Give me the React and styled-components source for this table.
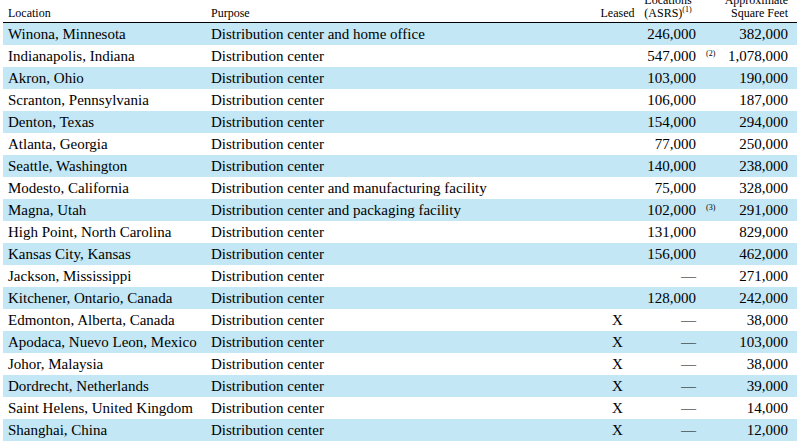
import styled, { createGlobalStyle } from 'styled-components';

const GlobalStyle = createGlobalStyle`
    html, body {
        margin: 0;
        padding: 0;
        background: #fff;
        overflow: hidden;
    }
    body {
        font-family: "Liberation Serif", "Times New Roman", serif;
        color: #000;
    }
`;

const Page = styled.div`
    width: 800px;
    height: 446px;
    overflow: hidden;
`;

const Table = styled.table`
    width: 794px;
    margin: -6px 0 0 3px;
    border-collapse: collapse;
    table-layout: fixed;
`;

const HeadCell = styled.th`
    font-weight: normal;
    font-size: 12px;
    line-height: 13px;
    vertical-align: bottom;
    padding: 0 ${({ $pr }) => $pr || 0}px 2px ${({ $pl }) => $pl || 0}px;
    text-align: ${({ $align }) => $align || 'left'};
    border-bottom: 1px solid #000;
    white-space: nowrap;
`;

const Row = styled.tr`
    background: ${({ $shaded }) => ($shaded ? '#c3e7f5' : '#fff')};
`;

const Cell = styled.td`
    font-size: 15px;
    height: 22px;
    line-height: 22px;
    padding: 0 ${({ $pr }) => $pr || 0}px 0 ${({ $pl }) => $pl || 0}px;
    text-align: ${({ $align }) => $align || 'left'};
    white-space: nowrap;
    vertical-align: middle;
`;

const Sup = styled.span`
    font-size: 8px;
    line-height: 0;
    vertical-align: 5px;
`;

const NoteCell = styled.td`
    font-size: 8px;
    line-height: 22px;
    padding: 0 0 0 9px;
    vertical-align: top;
    white-space: nowrap;
`;

const Note = styled.span`
    position: relative;
    top: -2px;
`;

const rows = [
    ['Winona, Minnesota', 'Distribution center and home office', '', '246,000', '', '382,000'],
    ['Indianapolis, Indiana', 'Distribution center', '', '547,000', '(2)', '1,078,000'],
    ['Akron, Ohio', 'Distribution center', '', '103,000', '', '190,000'],
    ['Scranton, Pennsylvania', 'Distribution center', '', '106,000', '', '187,000'],
    ['Denton, Texas', 'Distribution center', '', '154,000', '', '294,000'],
    ['Atlanta, Georgia', 'Distribution center', '', '77,000', '', '250,000'],
    ['Seattle, Washington', 'Distribution center', '', '140,000', '', '238,000'],
    ['Modesto, California', 'Distribution center and manufacturing facility', '', '75,000', '', '328,000'],
    ['Magna, Utah', 'Distribution center and packaging facility', '', '102,000', '(3)', '291,000'],
    ['High Point, North Carolina', 'Distribution center', '', '131,000', '', '829,000'],
    ['Kansas City, Kansas', 'Distribution center', '', '156,000', '', '462,000'],
    ['Jackson, Mississippi', 'Distribution center', '', '\u2014', '', '271,000'],
    ['Kitchener, Ontario, Canada', 'Distribution center', '', '128,000', '', '242,000'],
    ['Edmonton, Alberta, Canada', 'Distribution center', 'X', '\u2014', '', '38,000'],
    ['Apodaca, Nuevo Leon, Mexico', 'Distribution center', 'X', '\u2014', '', '103,000'],
    ['Johor, Malaysia', 'Distribution center', 'X', '\u2014', '', '38,000'],
    ['Dordrecht, Netherlands', 'Distribution center', 'X', '\u2014', '', '39,000'],
    ['Saint Helens, United Kingdom', 'Distribution center', 'X', '\u2014', '', '14,000'],
    ['Shanghai, China', 'Distribution center', 'X', '\u2014', '', '12,000'],
];

export default function App() {
    return (
        <Page>
            <GlobalStyle />
            <Table>
                <colgroup>
                    <col style={{ width: 205 }} />
                    <col style={{ width: 388 }} />
                    <col style={{ width: 43 }} />
                    <col style={{ width: 58 }} />
                    <col style={{ width: 22 }} />
                    <col style={{ width: 78 }} />
                </colgroup>
                <thead>
                    <tr>
                        <HeadCell $pl={5}>Location</HeadCell>
                        <HeadCell $pl={3}>Purpose</HeadCell>
                        <HeadCell $align="center">Leased</HeadCell>
                        <HeadCell $align="center">
                            Locations
                            <br />
                            (ASRS)<Sup>(1)</Sup>
                        </HeadCell>
                        <HeadCell />
                        <HeadCell $align="right" $pr={9}>
                            Approximate
                            <br />
                            Square Feet
                        </HeadCell>
                    </tr>
                </thead>
                <tbody>
                    {rows.map(([loc, purpose, leased, asrs, note, sqft], i) => (
                        <Row key={loc} $shaded={i % 2 === 0}>
                            <Cell $pl={5}>{loc}</Cell>
                            <Cell $pl={3}>{purpose}</Cell>
                            <Cell $align="center">{leased}</Cell>
                            <Cell $align="right" $pr={1}>{asrs}</Cell>
                            <NoteCell>{note && <Note>{note}</Note>}</NoteCell>
                            <Cell $align="right" $pr={9}>{sqft}</Cell>
                        </Row>
                    ))}
                </tbody>
            </Table>
        </Page>
    );
}
